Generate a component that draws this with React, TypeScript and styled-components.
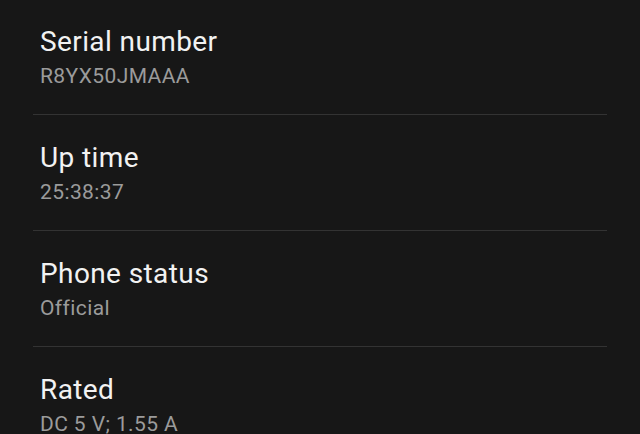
import styled, { createGlobalStyle } from 'styled-components';

const items = [
  { title: 'Serial number', value: 'R8YX50JMAAA' },
  { title: 'Up time', value: '25:38:37' },
  { title: 'Phone status', value: 'Official' },
  { title: 'Rated', value: 'DC 5 V; 1.55 A' },
];

const App = () => {
  return (
    <>
      <GlobalStyle />
      <List>
        {items.map((item, i) => (
          <Row key={item.title} $last={i === items.length - 1}>
            <Title>{item.title}</Title>
            <Value>{item.value}</Value>
          </Row>
        ))}
      </List>
    </>
  );
};

export default App;

const GlobalStyle = createGlobalStyle`
  html, body {
    margin: 0;
    background: #171717;
    height: 100%;
    overflow: hidden;
  }
`;

const List = styled.div`
  display: flex;
  flex-direction: column;
  padding: 0 33px;
  margin-top: -1px;
  font-family: Roboto, "Liberation Sans", sans-serif;
`;

const Row = styled.div<{ $last: boolean }>`
  height: 116px;
  box-sizing: border-box;
  padding: 27px 7px 0;
  border-bottom: ${(p) => (p.$last ? 'none' : '1px solid #333333')};
`;

const Title = styled.div`
  font-size: 28px;
  line-height: 32px;
  letter-spacing: 0.4px;
  color: #f2f2f2;
`;

const Value = styled.div`
  font-size: 21px;
  line-height: 26px;
  letter-spacing: 0.4px;
  color: #9b9b9b;
  margin-top: 5px;
`;
